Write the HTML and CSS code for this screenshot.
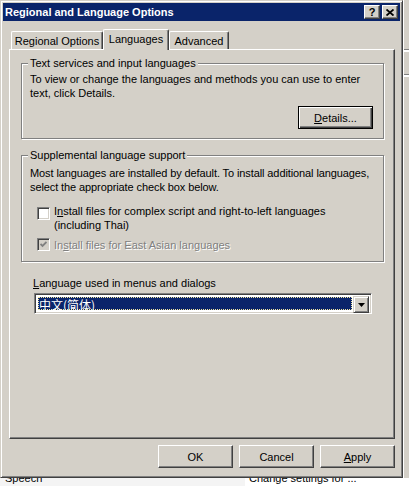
FILE: index.html
```html
<!DOCTYPE html>
<html lang="en">

<head>
    <meta charset="UTF-8">
    <title>Regional and Language Options</title>
    <link rel="stylesheet" href="styles.css">
</head>

<body>
    <div class="screen">
        <div class="top">
            <div class="window">
                <div class="titlebar">
                    <span class="title">Regional and Language Options</span>
                    <div class="caption-btns">
                        <div class="cap help">?</div>
                        <div class="cap">
                            <svg width="8" height="7" viewBox="0 0 8 7">
                                <path d="M0.5 0.5 L7.5 6.5 M7.5 0.5 L0.5 6.5" stroke="#000" stroke-width="1.8" fill="none"/>
                            </svg>
                        </div>
                    </div>
                </div>

                <div class="tabs">
                    <div class="tab tab-regional">Regional Options</div>
                    <div class="tab tab-languages active">Languages</div>
                    <div class="tab tab-advanced">Advanced</div>
                </div>

                <div class="panel">
                    <fieldset class="group g1">
                        <legend>Text services and input languages</legend>
                        <p class="desc">To view or change the languages and methods you can use to enter<br>text, click Details.</p>
                        <div class="right-row">
                            <div class="btn default"><u>D</u>etails...</div>
                        </div>
                    </fieldset>

                    <fieldset class="group g2">
                        <legend>Supplemental language support</legend>
                        <p class="desc">Most languages are installed by default. To install additional languages,<br>select the appropriate check box below.</p>
                        <div class="check first">
                            <span class="box"></span>
                            <span>I<u>n</u>stall files for complex script and right-to-left languages<br>(including Thai)</span>
                        </div>
                        <div class="check disabled">
                            <span class="box">
                                <svg width="7" height="7" viewBox="0 0 7 7">
                                    <path d="M0.5 3 L2.5 5 L6.5 1" stroke="#808080" stroke-width="1.8" fill="none"/>
                                </svg>
                            </span>
                            <span>In<u>s</u>tall files for East Asian languages</span>
                        </div>
                    </fieldset>

                    <div class="lang">
                        <div class="lang-label"><u>L</u>anguage used in menus and dialogs</div>
                        <div class="combo">
                            <div class="combo-value"><span class="sel">中文(简体)</span></div>
                            <div class="combo-btn">
                                <svg width="7" height="4" viewBox="0 0 7 4">
                                    <polygon points="0,0 7,0 3.5,4" fill="#000"/>
                                </svg>
                            </div>
                        </div>
                    </div>
                </div>

                <div class="buttons">
                    <div class="btn">OK</div>
                    <div class="btn">Cancel</div>
                    <div class="btn"><u>A</u>pply</div>
                </div>
            </div>
            <div class="behind-right">
                <div class="br-line"></div>
                <div class="br-line"></div>
            </div>
        </div>
        <div class="behind-bottom">
            <div class="bb-left">Speech</div>
            <div class="bb-right">Change settings for ...</div>
        </div>
    </div>
</body>

</html>
```

FILE: styles.css
```css
* {
    margin: 0;
    padding: 0;
}

body {
    background: #fff;
}

.screen {
    width: 409px;
    height: 486px;
    overflow: hidden;
    font-family: "Liberation Sans", Arial, sans-serif;
    font-size: 11px;
    color: #000;
}

.top {
    display: flex;
    height: 478px;
}

.window {
    width: 403px;
    height: 478px;
    box-sizing: border-box;
    background: #d4d0c8;
    border: 1px solid;
    border-color: #d4d0c8 #404040 #404040 #d4d0c8;
    box-shadow: inset 1px 1px #fff, inset -1px -1px #808080;
    padding: 2px;
    display: flex;
    flex-direction: column;
}

/* title bar */
.titlebar {
    height: 18px;
    background: #0a246a;
    color: #fff;
    display: flex;
    align-items: center;
    justify-content: space-between;
    padding: 0 2px;
}

.title {
    font-weight: bold;
}

.caption-btns {
    display: flex;
    gap: 2px;
}

.cap {
    width: 16px;
    height: 14px;
    box-sizing: border-box;
    background: #d4d0c8;
    border: 1px solid;
    border-color: #fff #404040 #404040 #fff;
    box-shadow: inset -1px -1px #808080;
    display: flex;
    align-items: center;
    justify-content: center;
    color: #000;
}

.help {
    font-weight: bold;
    font-size: 11px;
    line-height: 11px;
}

/* tabs */
.tabs {
    display: flex;
    align-items: flex-end;
    height: 20px;
    margin: 8px 0 0 6px;
    padding-left: 2px;
}

.tab {
    height: 18px;
    box-sizing: border-box;
    border-top: 1px solid #fff;
    border-left: 1px solid #fff;
    border-right: 1px solid #404040;
    box-shadow: inset -1px 0 #808080;
    border-radius: 2px 2px 0 0;
    text-align: center;
    padding-top: 3px;
}

.tab-regional {
    width: 92px;
}

.tab-languages {
    width: 66px;
}

.tab-advanced {
    width: 60px;
}

.tab.active {
    height: 21px;
    margin-bottom: -1px;
    background: #d4d0c8;
    position: relative;
    z-index: 1;
    padding-top: 3px;
}

/* tab page */
.panel {
    width: 386px;
    height: 390px;
    margin-left: 6px;
    box-sizing: border-box;
    border: 1px solid;
    border-color: #fff #404040 #404040 #fff;
    box-shadow: inset -1px -1px #808080;
    padding: 7px 0 0 11px;
}

.group {
    width: 363px;
    box-sizing: border-box;
    border: 1px solid #808080;
    box-shadow: inset 1px 1px #fff, 1px 1px #fff;
    padding: 0 10px 9px 8px;
    min-width: 0;
}

.group legend {
    line-height: 13px;
    padding: 0 2px;
    margin-left: -2px;
    background: #d4d0c8;
}

.desc {
    line-height: 14px;
    white-space: nowrap;
}

.g1 .desc {
    margin-top: 2px;
}

.right-row {
    display: flex;
    justify-content: flex-end;
    margin-top: 6px;
}

.g2 {
    margin-top: 10px;
}

.g2 .desc {
    margin-top: 4px;
    letter-spacing: -0.1px;
}

.check {
    display: flex;
    gap: 4px;
    line-height: 14px;
    margin-left: 7px;
    white-space: nowrap;
}

.check.first {
    margin-top: 10px;
}

.check.disabled {
    margin-top: 6px;
    color: #808080;
    text-shadow: 1px 1px #fff;
}

.box {
    width: 13px;
    height: 13px;
    flex: none;
    margin-top: 3px;
    box-sizing: border-box;
    border: 1px solid;
    border-color: #808080 #fff #fff #808080;
    box-shadow: inset 1px 1px #404040, inset -1px -1px #d4d0c8;
    background: #fff;
    display: flex;
    align-items: center;
    justify-content: center;
}

.check.disabled .box {
    margin-top: 0;
    background: #d4d0c8;
}

/* language combo */
.lang {
    margin: 14px 0 0 12px;
}

.lang-label {
    line-height: 14px;
}

.combo {
    display: flex;
    width: 338px;
    height: 21px;
    margin: 3px 0 0 1px;
    box-sizing: border-box;
    border: 1px solid;
    border-color: #808080 #fff #fff #808080;
    box-shadow: inset 1px 1px #404040, inset -1px -1px #d4d0c8;
    background: #fff;
    padding: 2px;
}

.combo-value {
    flex: 1;
    display: flex;
    padding: 1px;
}

.sel {
    flex: 1;
    background: #0a246a;
    color: #fff;
    border: 1px dotted #f0e6a0;
    font-family: "Noto Sans CJK SC", sans-serif;
    font-size: 12px;
    line-height: 13px;
}

.combo-btn {
    width: 16px;
    height: 17px;
    box-sizing: border-box;
    background: #d4d0c8;
    border: 1px solid;
    border-color: #d4d0c8 #404040 #404040 #d4d0c8;
    box-shadow: inset 1px 1px #fff, inset -1px -1px #808080;
    display: flex;
    align-items: center;
    justify-content: center;
}

/* push buttons */
.buttons {
    display: flex;
    justify-content: flex-end;
    gap: 6px;
    margin-top: 6px;
    padding-right: 5px;
}

.btn {
    width: 75px;
    height: 23px;
    box-sizing: border-box;
    border: 1px solid;
    border-color: #fff #404040 #404040 #fff;
    box-shadow: inset -1px -1px #808080;
    display: flex;
    align-items: center;
    justify-content: center;
}

.btn.default {
    border-color: #000;
    box-shadow: inset 1px 1px #fff, inset -1px -1px #404040, inset -2px -2px #808080;
}

/* windows behind the dialog */
.behind-right {
    flex: 1;
    background: #d4d0c8;
    border-left: 1px solid #fff;
    display: flex;
    flex-direction: column;
    gap: 22px;
    padding-top: 49px;
}

.br-line {
    height: 2px;
    background: #fff;
    border-top: 1px solid #808080;
}

.behind-bottom {
    display: flex;
    height: 8px;
    overflow: hidden;
}

.bb-left {
    width: 240px;
    background: #f4f4f4;
    padding-left: 5px;
    margin-top: -7px;
    line-height: 14px;
}

.bb-right {
    flex: 1;
    padding-left: 4px;
    margin-top: -7px;
    line-height: 14px;
}
```
